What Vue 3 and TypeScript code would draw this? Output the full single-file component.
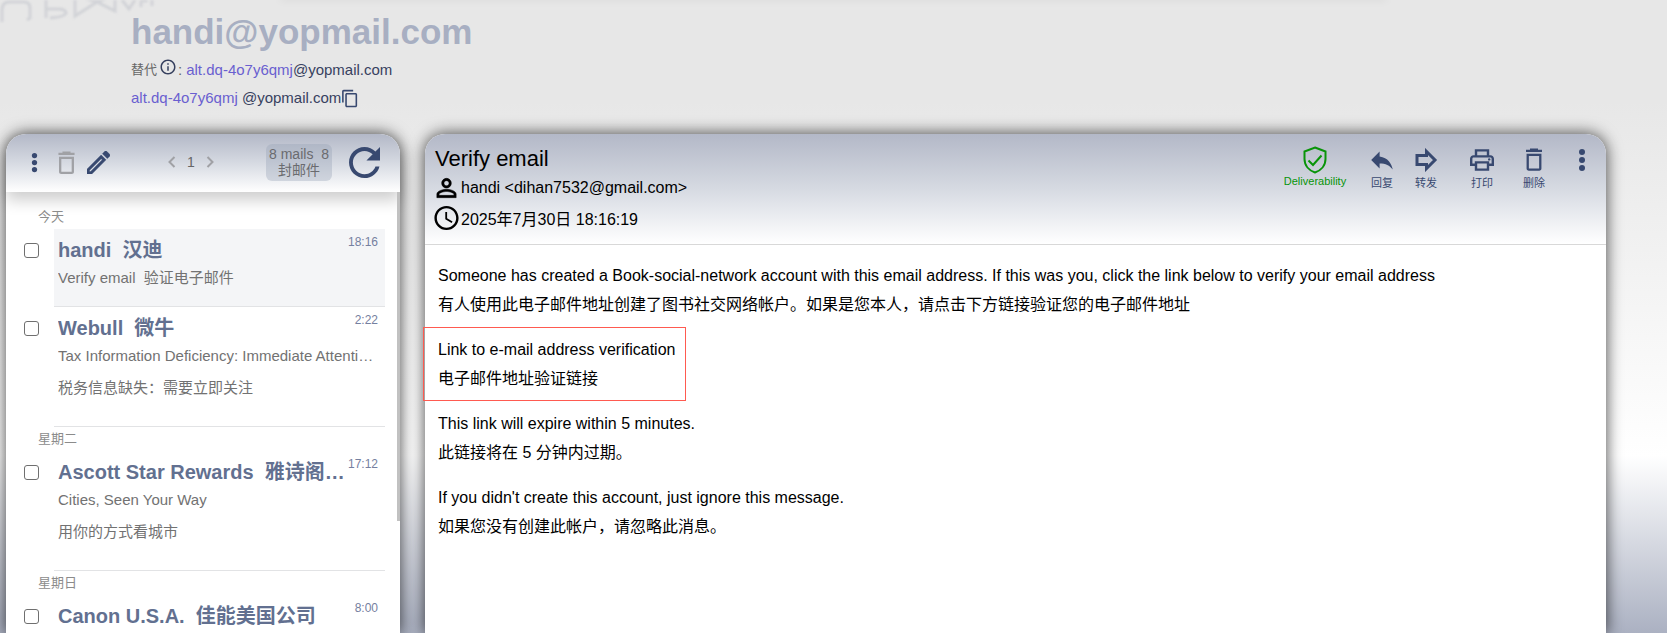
<script setup lang="ts">
import { ref } from 'vue'

interface Mail {
  sender: string
  time: string
  lines: string[]
  active?: boolean
}

interface Group {
  label: string
  mails: Mail[]
}

const groups: Group[] = [
  {
    label: '今天',
    mails: [
      { sender: 'handi \u00a0汉迪', time: '18:16', lines: ['Verify email \u00a0验证电子邮件'], active: true },
      {
        sender: 'Webull \u00a0微牛',
        time: '2:22',
        lines: ['Tax Information Deficiency: Immediate Attenti…', '税务信息缺失：需要立即关注'],
      },
    ],
  },
  {
    label: '星期二',
    mails: [
      {
        sender: 'Ascott Star Rewards \u00a0雅诗阁…',
        time: '17:12',
        lines: ['Cities, Seen Your Way', '用你的方式看城市'],
      },
    ],
  },
  {
    label: '星期日',
    mails: [{ sender: 'Canon U.S.A. \u00a0佳能美国公司', time: '8:00', lines: [] }],
  },
]

const paragraphs: { en: string; zh: string; marked?: boolean }[] = [
  {
    en: 'Someone has created a Book-social-network account with this email address. If this was you, click the link below to verify your email address',
    zh: '有人使用此电子邮件地址创建了图书社交网络帐户。如果是您本人，请点击下方链接验证您的电子邮件地址',
  },
  { en: 'Link to e-mail address verification', zh: '电子邮件地址验证链接', marked: true },
  { en: 'This link will expire within 5 minutes.', zh: '此链接将在 5 分钟内过期。' },
  { en: "If you didn't create this account, just ignore this message.", zh: '如果您没有创建此帐户，请忽略此消息。' },
]

const checked = ref<string[]>([])
</script>

<template>
  <div class="page">
    <div class="top-shade"></div>
    <svg class="reflection" viewBox="0 0 160 28" aria-hidden="true">
      <path d="M2 22V10Q2 2 9 2H24Q30 2 30 8V18L27 20" />
      <path d="M46 0V18M46 9H58Q66 9 66 13Q65 17 50 18" />
      <path d="M75 0V16L97 2L115 11V0M84 -2L97 2L107 -2" />
      <path d="M122 0L129 9L135 0M141 7V2Q144 -1 147 2M152 0V6" />
    </svg>

    <header class="account">
      <h1>handi@yopmail.com</h1>
      <p class="alt">
        <span class="alt-label">替代</span>
        <svg class="info" viewBox="0 0 24 24" aria-hidden="true">
          <path d="M11 7h2v2h-2zm0 4h2v6h-2zm1-9C6.480 2 2 6.480 2 12s4.480 10 10 10 10-4.480 10-10S17.520 2 12 2zm0 18c-4.410 0-8-3.590-8-8s3.590-8 8-8 8 3.590 8 8-3.590 8-8 8z" />
        </svg>
        <span class="colon">:</span>
        <a href="#">alt.dq-4o7y6qmj</a><span>@yopmail.com</span>
      </p>
      <p class="alt">
        <a href="#">alt.dq-4o7y6qmj</a><span>&nbsp;@yopmail.com</span>
        <button type="button" class="copy" aria-label="Copy">
          <svg viewBox="1 0 22 24"><path d="M16 1H4c-1.100 0-2 .9-2 2v14h2V3h12V1zm3 4H8c-1.100 0-2 .9-2 2v14c0 1.100.9 2 2 2h11c1.100 0 2-.9 2-2V7c0-1.100-.9-2-2-2zm0 16H8V7h11v14z" /></svg>
        </button>
      </p>
    </header>

    <div class="panels">
      <section class="inbox">
        <div class="inbox-bar">
          <button type="button" class="more" aria-label="More">
            <svg viewBox="0 0 24 24"><circle cx="12" cy="4" r="3" /><circle cx="12" cy="12" r="3" /><circle cx="12" cy="20" r="3" /></svg>
          </button>
          <button type="button" class="dim trash" aria-label="Delete">
            <svg viewBox="4 2 16 20"><path d="M15.500 3.500V2.500H8.500V3.500H5V5.500H19V3.500ZM5.500 7V20C5.500 21.100 6.300 22 7.500 22H16.500C17.700 22 18.500 21.100 18.500 20V7ZM7.500 9H16.500V20H7.500Z" fill-rule="evenodd" /></svg>
          </button>
          <button type="button" class="pencil" aria-label="Write">
            <svg viewBox="3 3 18 18"><path d="M14.060 9.020l.92.92L5.920 19H5v-.92l9.060-9.060M17.660 3c-.25 0-.51.1-.7.290l-1.830 1.830 3.750 3.750 1.830-1.830c.39-.39.39-1.020 0-1.410l-2.340-2.340c-.2-.2-.45-.29-.71-.29zm-3.600 3.190L3 17.250V21h3.750L17.810 9.940l-3.750-3.750z" stroke="currentColor" stroke-width=".4" /></svg>
          </button>
          <nav class="pager">
            <button type="button" class="dim" aria-label="Previous page"><svg viewBox="0 0 12 12"><path d="M8.500 1L3.500 6l5 5" /></svg></button>
            <span>1</span>
            <button type="button" class="dim" aria-label="Next page"><svg viewBox="0 0 12 12"><path d="M3.500 1l5 5-5 5" /></svg></button>
          </nav>
          <div class="count">8 mails &nbsp;8<br />封邮件</div>
          <button type="button" class="refresh" aria-label="Refresh">
            <svg viewBox="4 4 16 16"><path d="M17.650 6.350C16.200 4.900 14.210 4 12 4c-4.420 0-7.990 3.580-7.990 8s3.570 8 7.990 8c3.730 0 6.840-2.550 7.730-6h-2.080c-.82 2.330-3.040 4-5.650 4-3.310 0-6-2.690-6-6s2.690-6 6-6c1.660 0 3.140.69 4.220 1.780L13 11h7V4l-2.350 2.350z" /></svg>
          </button>
        </div>

        <div class="list">
          <div v-for="(group, g) in groups" :key="group.label">
            <h2>{{ group.label }}</h2>
            <div v-for="mail in group.mails" :key="mail.sender" class="row">
              <input
                :id="`pick-${g}-${mail.time}`"
                v-model="checked"
                type="checkbox"
                :value="mail.sender"
                :aria-label="mail.sender"
              />
              <div class="mail" :class="{ active: mail.active, single: mail.lines.length === 1 }">
                <div class="mail-top">
                  <strong>{{ mail.sender }}</strong>
                  <time>{{ mail.time }}</time>
                </div>
                <p v-for="line in mail.lines" :key="line">{{ line }}</p>
              </div>
            </div>
          </div>
        </div>
        <div class="thumb"></div>
      </section>

      <article class="message">
        <header class="message-head">
          <div class="details">
            <h2>Verify email</h2>
            <p>
              <svg viewBox="0 0 24 24" aria-hidden="true"><path d="M12 5.900c1.160 0 2.100.94 2.100 2.100s-.94 2.100-2.100 2.100S9.900 9.160 9.900 8s.94-2.100 2.100-2.100m0 9c2.970 0 6.100 1.460 6.100 2.100v1.100H5.900V17c0-.64 3.130-2.100 6.100-2.100M12 4C9.790 4 8 5.790 8 8s1.790 4 4 4 4-1.790 4-4-1.790-4-4-4zm0 9c-2.670 0-8 1.340-8 4v3h16v-3c0-2.660-5.330-4-8-4z" stroke="currentColor" stroke-width=".4" /></svg>
              handi &lt;dihan7532@gmail.com&gt;
            </p>
            <p>
              <svg viewBox="0 0 24 24" aria-hidden="true"><path d="M11.990 2C6.470 2 2 6.480 2 12s4.470 10 9.990 10C17.520 22 22 17.520 22 12S17.520 2 11.990 2zM12 20c-4.420 0-8-3.580-8-8s3.580-8 8-8 8 3.580 8 8-3.580 8-8 8zm.5-13H11v6l5.250 3.150.75-1.230-4.500-2.670z" /></svg>
              2025年7月30日 18:16:19
            </p>
          </div>
          <div class="actions">
            <button type="button" class="deliver">
              <svg viewBox="0 0 24 28"><path d="M12 1.500L22.500 5.500V13C22.500 19.500 18 24.500 12 26.500C6 24.500 1.500 19.500 1.500 13V5.500Z" /><path d="M5.500 14.500L10 19L18.500 9.500" /></svg>
              Deliverability
            </button>
            <button type="button" class="reply">
              <svg viewBox="3 2 18 20"><path d="M10 9V5l-7 7 7 7v-4.100c5 0 8.500 1.600 11 5.100-1-5-4-10-11-11z" /></svg>
              回复
            </button>
            <button type="button" class="forward">
              <svg viewBox="0 0 24 24"><path d="M3 7.500H12.500V3.500L21 12L12.500 20.500V16.500H3Z" /></svg>
              转发
            </button>
            <button type="button" class="print">
              <svg viewBox="2 2 20 20"><path d="M19 8h-1V3H6v5H5c-1.660 0-3 1.340-3 3v6h4v4h12v-4h4v-6c0-1.660-1.340-3-3-3zM8 5h8v3H8V5zm8 12v2H8v-4h8v2zm2-2v-2H6v2H4v-4c0-.55.45-1 1-1h14c.55 0 1 .45 1 1v4h-2z" /><circle cx="18" cy="11.500" r="1" /></svg>
              打印
            </button>
            <button type="button" class="remove">
              <svg viewBox="2 2 20 21"><path d="M15.500 3.500V2.500H8.500V3.500H5V5.500H19V3.500ZM5.500 7V20C5.500 21.100 6.300 22 7.500 22H16.500C17.700 22 18.500 21.100 18.500 20V7ZM7.500 9H16.500V20H7.500Z" fill-rule="evenodd" /></svg>
              删除
            </button>
            <button type="button" class="more" aria-label="More">
              <svg viewBox="0 0 24 24"><circle cx="12" cy="4" r="3" /><circle cx="12" cy="12" r="3" /><circle cx="12" cy="20" r="3" /></svg>
            </button>
          </div>
        </header>
        <div class="content">
          <p v-for="item in paragraphs" :key="item.en" :class="{ marked: item.marked }">
            {{ item.en }}<br />{{ item.zh }}
          </p>
        </div>
      </article>
    </div>
  </div>
</template>

<style>
body {
  margin: 0;
}
</style>

<style scoped>
.page {
  position: relative;
  display: flex;
  flex-direction: column;
  height: 100vh;
  overflow: hidden;
  background: linear-gradient(#e7e7e7 16%, #ffffff 72%, #abb1c2 100%);
  font-family: "Liberation Sans", Arial, "Noto Sans CJK SC", sans-serif;
  color: #37415f;
}

h1,
h2,
p {
  margin: 0;
}

button {
  display: flex;
  align-items: center;
  justify-content: center;
  padding: 0;
  border: 0;
  background: none;
  color: #384970;
  font-family: inherit;
  cursor: pointer;
}

svg {
  display: block;
  flex: none;
  fill: currentColor;
}

a {
  color: #6a5fd0;
  text-decoration: none;
}

.top-shade {
  position: absolute;
  top: -4px;
  left: 280px;
  right: 280px;
  height: 4px;
  box-shadow: 0 0 8px rgba(0, 0, 0, 0.08);
}

.reflection {
  position: absolute;
  top: 0;
  left: 0;
  width: 160px;
  height: 28px;
  fill: none;
  stroke: #c9cbd1;
  stroke-width: 3;
  filter: blur(1px);
  opacity: 0.7;
}

.account {
  height: 122px;
  padding: 12px 0 0 131px;
  box-sizing: border-box;
}

.account h1 {
  font-size: 35px;
  line-height: 40px;
  color: #a8afc2;
}

.alt {
  display: flex;
  align-items: center;
  height: 28px;
  margin-top: 4px;
  font-size: 15px;
  line-height: 28px;
}

.alt + .alt {
  margin-top: 0;
}

.alt-label {
  font-size: 13px;
  color: #666666;
}

.info {
  width: 18px;
  height: 18px;
  margin: 0 1px 6px 2px;
}

.colon {
  margin-right: 4px;
  color: #666666;
}

.copy svg {
  width: 18px;
  height: 19px;
}

.panels {
  display: flex;
  flex: 1;
  gap: 25px;
  min-height: 0;
  margin-top: 12px;
  padding: 0 61px 0 6px;
}

.inbox,
.message {
  background: #ffffff;
  border-radius: 20px 20px 0 0;
  box-shadow: 0 0 15px 1px rgba(0, 0, 0, 0.65);
}

.inbox {
  position: relative;
  display: flex;
  flex-direction: column;
  flex: none;
  width: 394px;
}

.inbox-bar {
  display: flex;
  align-items: center;
  height: 58px;
  padding: 0 20px 2px 18px;
  box-sizing: border-box;
  border-radius: 20px 20px 0 0;
  background: linear-gradient(#b3b8c7, #d6dae2 50%, #ffffff);
  box-shadow: 0 8px 16px rgba(0, 0, 0, 0.2);
}

.more svg {
  width: 21px;
  height: 21px;
}

.trash {
  margin-left: 12px;
}

.trash svg {
  width: 19px;
  height: 23px;
}

.pencil svg {
  width: 23px;
  height: 23px;
}

.pencil {
  margin-left: 11px;
}

.dim {
  color: #a0a1a5;
}

.pager {
  display: flex;
  align-items: center;
  gap: 9px;
  margin-left: 56px;
  font-size: 14px;
  color: #666666;
}

.pager svg {
  width: 12px;
  height: 12px;
  fill: none;
  stroke: currentColor;
  stroke-width: 2;
}

.count {
  width: 66px;
  margin-left: auto;
  padding: 2px 0 3px;
  box-sizing: border-box;
  border-radius: 6px;
  background: rgba(150, 160, 180, 0.35);
  color: #6a6b6f;
  font-size: 14px;
  line-height: 16px;
  text-align: center;
}

.refresh {
  margin-left: 17px;
}

.refresh svg {
  width: 31px;
  height: 31px;
}

.list {
  flex: 1;
  min-height: 0;
  overflow: hidden;
  padding: 13px 15px 0 18px;
}

.list h2 {
  padding-left: 14px;
  font-size: 13px;
  font-weight: 400;
  line-height: 24px;
  color: #8b8b8b;
}

.row {
  display: flex;
}

.row input {
  appearance: none;
  flex: none;
  width: 15px;
  height: 15px;
  margin: 14px 15px 0 0;
  border: 1px solid #6f6f6f;
  border-radius: 3px;
  background: #ffffff;
}

.row input:checked {
  background: #384970;
}

.mail {
  flex: 1;
  min-width: 0;
  height: 120px;
  box-sizing: border-box;
  padding: 6px 7px 0 4px;
  border-bottom: 1px solid #e2e3e5;
}

.mail.single {
  height: 78px;
}

.mail.active {
  background: #f4f5f7;
}

.mail-top {
  display: flex;
  align-items: flex-start;
  gap: 2px;
}

.mail strong {
  flex: 1;
  overflow: hidden;
  font-size: 20px;
  line-height: 30px;
  color: #627090;
  text-overflow: ellipsis;
  white-space: nowrap;
}

.mail time {
  font-size: 12px;
  line-height: 14px;
  color: #7580a0;
}

.mail p {
  overflow: hidden;
  font-size: 15px;
  line-height: 26px;
  color: #727272;
  text-overflow: ellipsis;
  white-space: nowrap;
}

.mail p + p {
  margin-top: 6px;
}

.thumb {
  position: absolute;
  top: 58px;
  right: 0;
  width: 3px;
  height: 329px;
  background: #c1c1c1;
}

.message {
  flex: 1;
  min-width: 0;
  color: #000000;
}

.message-head {
  display: flex;
  justify-content: space-between;
  height: 111px;
  box-sizing: border-box;
  padding: 11px 12px 0 7px;
  border-bottom: 1px solid #d8d8d8;
  border-radius: 20px 20px 0 0;
  background: linear-gradient(#b3b8c7, #d6dae2 50%, #ffffff);
}

.details h2 {
  padding-left: 3px;
  font-size: 22px;
  font-weight: 400;
  line-height: 28px;
}

.details p {
  display: flex;
  align-items: center;
  height: 30px;
  font-size: 16px;
}

.details svg {
  width: 29px;
  height: 30px;
}

.actions {
  display: flex;
  align-items: flex-start;
}

.actions button {
  flex-direction: column;
  justify-content: flex-start;
  width: 24px;
  font-size: 11px;
  line-height: 14px;
  white-space: nowrap;
}

.actions svg {
  width: 24px;
  height: 24px;
  margin: 3px 0 4px;
}

.actions .deliver {
  width: 64px;
  margin-right: 23px;
  color: #089408;
}

.actions .deliver svg {
  height: 28px;
  margin: 1px 0 0;
  fill: none;
  stroke: currentColor;
  stroke-width: 2;
}

.actions .forward {
  margin: 0 32px 0 20px;
}

.actions .forward svg {
  fill: none;
  stroke: currentColor;
  stroke-width: 3;
}

.actions .print {
  margin-right: 28px;
}

.actions .print svg {
  width: 26px;
}

.actions .more {
  margin-left: 24px;
}

.content {
  display: flex;
  flex-direction: column;
  align-items: flex-start;
  gap: 16px;
  padding: 16px 13px;
  font-size: 16px;
  line-height: 29px;
}

.marked {
  position: relative;
}

.marked::after {
  position: absolute;
  inset: -8px -11px -8px -15px;
  border: 1px solid #ff5a50;
  content: "";
}
</style>
